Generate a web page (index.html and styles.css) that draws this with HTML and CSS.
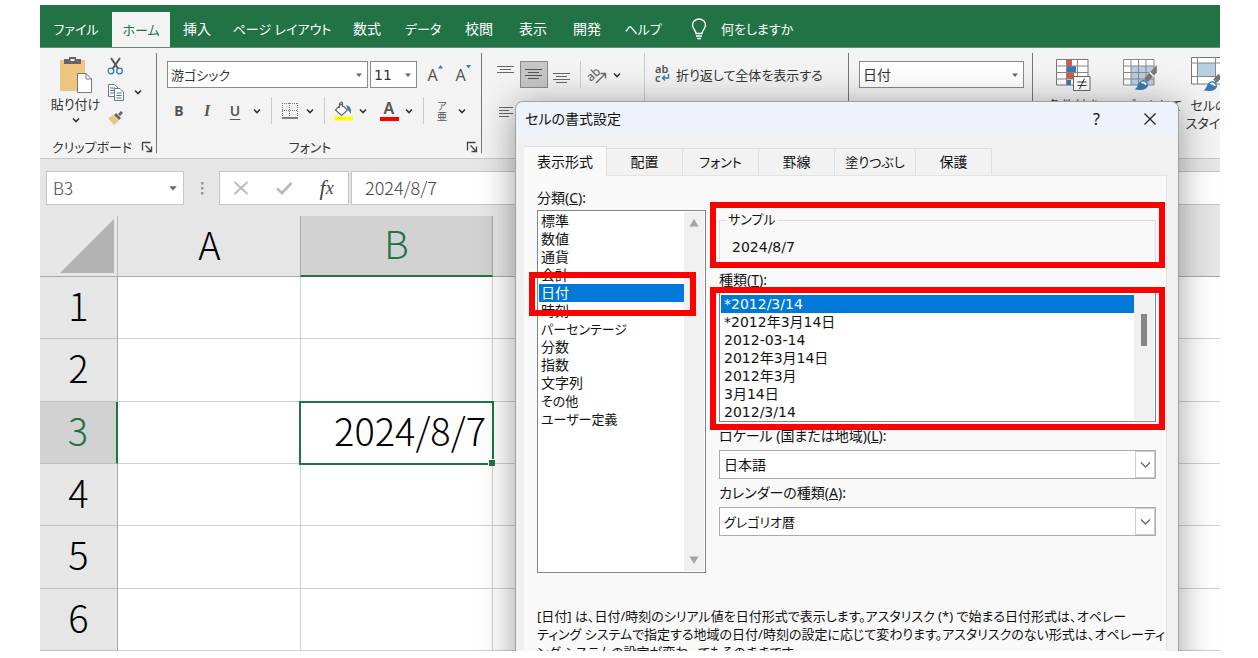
FILE: index.html
```html
<!DOCTYPE html>
<html lang="ja">
<head>
<meta charset="utf-8">
<title>セルの書式設定</title>
<link rel="stylesheet" href="styles.css">
</head>
<body>
<svg class="defs" aria-hidden="true">
  <symbol id="chev" viewBox="0 0 10 10"><path d="M2 3.5 5 6.5 8 3.5" fill="none" stroke="#333" stroke-width="1.6"/></symbol>
  <symbol id="tri" viewBox="0 0 8 8"><path d="M1 2.5H7L4 6Z" fill="#666"/></symbol>
  <symbol id="launch" viewBox="0 0 12 12"><path d="M1.5 9.500V1.500H9.500M4.500 4.500 10 10M10.500 5.500V10.500H5.500" fill="none" stroke="#444" stroke-width="1.3"/></symbol>
  <symbol id="brush" viewBox="0 0 26 30"><path d="M25 0V8L15 19 11 15Z" fill="#777"/><path d="M17 8 22 13" stroke="#fff" stroke-width="1.500"/><path d="M0 27C4 26 3 21 7 18Q11 15 14 19 17 23 13 26 8 29 0 27Z" fill="#3b78b8"/><path d="M8 20Q11 18 13 22" stroke="#fff" stroke-width="2" fill="none"/></symbol>
</svg>
<main class="app">
  <nav class="tabs">
    <button class="tab w72 kana">ファイル</button>
    <button class="tab w58 active kana">ホーム</button>
    <button class="tab">挿入</button>
    <button class="tab w116 kana">ページ レイアウト</button>
    <button class="tab">数式</button>
    <button class="tab w58 kana">データ</button>
    <button class="tab">校閲</button>
    <button class="tab">表示</button>
    <button class="tab">開発</button>
    <button class="tab w58 kana">ヘルプ</button>
    <button class="tell kana"><svg width="16" height="22" viewBox="0 0 16 22"><path d="M5 15.500C5 12 1.500 11 1.500 7A6.500 6 0 0 1 14.500 7C14.500 11 11 12 11 15.500ZM5 18H11M6 20.500H10" fill="none" stroke="#fff" stroke-width="1.400"/></svg>何をしますか</button>
  </nav>

  <section class="ribbon">
    <div class="group clipboard">
      <div class="clip-body">
        <button class="paste kana">
          <svg width="34" height="36" viewBox="0 0 34 36"><path d="M1 3H26V34H1Z" fill="#edc57f"/><path d="M5 7V2H10V0H17V2H22V7Z" fill="#666"/><path d="M11.500 2H15.500V4H11.500Z" fill="#eee"/><path d="M18.500 16.500H27L32.500 22V35.500H18.500Z" fill="#fff" stroke="#777"/><path d="M27 16.500V22H32.500" fill="none" stroke="#777"/></svg>
          <span>貼り付け</span>
          <svg width="10" height="10"><use href="#chev"/></svg>
        </button>
        <div class="clip-side">
          <button aria-label="切り取り"><svg width="17" height="18" viewBox="0 0 17 18"><path d="M4 1 11.500 12M13 1 5.500 12" stroke="#555" stroke-width="2" fill="none"/><circle cx="4" cy="14" r="2.800" fill="none" stroke="#3b78b8" stroke-width="1.300"/><circle cx="12.500" cy="14" r="2.800" fill="none" stroke="#3b78b8" stroke-width="1.300"/></svg></button>
          <button class="copy" aria-label="コピー"><svg width="18" height="18" viewBox="0 0 18 18"><path d="M1.500 1.500H7L10.500 4V13.500H1.500Z" fill="#fff" stroke="#777"/><path d="M3 5H8M3 7.500H8M3 10H8" stroke="#3b78b8"/><path d="M7.500 5.500H13L16.500 9V17.500H7.500Z" fill="#fff" stroke="#777"/><path d="M9.500 10H14.500M9.500 12.500H14.500M9.500 15H14.500" stroke="#3b78b8"/></svg><svg width="10" height="10"><use href="#chev"/></svg></button>
          <button aria-label="書式のコピー"><svg width="17" height="16" viewBox="0 0 17 16"><path d="M1 8 6 5 12 11 7 15Z" fill="#edc57f"/><path d="M7 5 9 3 14 8 12 10ZM11 4 14 1 16 3 13 6Z" fill="#666"/></svg></button>
        </div>
      </div>
      <footer class="caption kana"><span>クリップボード</span><button aria-label="クリップボードの設定"><svg width="12" height="12"><use href="#launch"/></svg></button></footer>
    </div>

    <div class="group font">
      <div class="row">
        <label class="combo font-name kana"><select aria-label="フォント"><option>游ゴシック</option></select><svg width="8" height="8"><use href="#tri"/></svg></label>
        <label class="combo font-size"><select aria-label="フォント サイズ"><option>11</option></select><svg width="8" height="8"><use href="#tri"/></svg></label>
        <button class="tool grow">A<svg width="5" height="4" viewBox="0 0 5 4"><path d="M0 3.500 2.500 0 5 3.500Z" fill="#3b78b8"/></svg></button>
        <button class="tool grow">A<svg width="5" height="4" viewBox="0 0 5 4"><path d="M0 0H5L2.500 3.500Z" fill="#3b78b8"/></svg></button>
      </div>
      <div class="row">
        <button class="tool wide bold">B</button><button class="tool wide italic">I</button><button class="tool wide under">U</button><button class="drop" aria-label="下線"><svg width="10" height="10"><use href="#chev"/></svg></button>
        <i class="sep"></i>
        <button class="tool" aria-label="罫線"><svg width="18" height="18" viewBox="0 0 18 18"><path d="M1 1.500H17M1 8.500H17M1.500 1V15M8.500 1V15M16.500 1V15" stroke="#777" stroke-dasharray="1 1" fill="none"/><path d="M1 16H17" stroke="#555" stroke-width="1.500"/></svg></button><button class="drop" aria-label="罫線の種類"><svg width="10" height="10"><use href="#chev"/></svg></button>
        <i class="sep"></i>
        <button class="tool" aria-label="塗りつぶしの色"><svg width="20" height="20" viewBox="0 0 20 20"><path d="M8 3 14.500 9 8.500 14.500 2.500 9ZM6.500 7V3Q8 0 9.500 2V6" fill="#fff" stroke="#666" stroke-width="1.200"/><path d="M13 4Q19 5 18 13L15 9Z" fill="#3b78b8"/><path d="M1 15.500H20V19.500H1Z" fill="#ff0"/></svg></button><button class="drop" aria-label="色の選択"><svg width="10" height="10"><use href="#chev"/></svg></button>
        <button class="tool fontcolor">A</button><button class="drop" aria-label="文字色の選択"><svg width="10" height="10"><use href="#chev"/></svg></button>
        <i class="sep"></i>
        <button class="tool ruby"><span>ア</span><span>亜</span></button><button class="drop" aria-label="ふりがな"><svg width="10" height="10"><use href="#chev"/></svg></button>
      </div>
      <footer class="caption kana"><span>フォント</span><button aria-label="フォントの設定"><svg width="12" height="12"><use href="#launch"/></svg></button></footer>
    </div>

    <div class="group align">
      <div class="align-left">
        <div class="row">
          <button class="tool wide" aria-label="上揃え"><svg width="18" height="22" viewBox="0 0 18 22"><path d="M0 2.500H17M3 5.500H14M0 8.500H17" stroke="#666" fill="none"/></svg></button>
          <button class="tool wide pressed" aria-label="上下中央揃え"><svg width="18" height="22" viewBox="0 0 18 22"><path d="M0 5.500H17M3 8.500H14M0 11.500H17M3 14.500H14" stroke="#555" fill="none"/></svg></button>
          <button class="tool wide" aria-label="下揃え"><svg width="18" height="22" viewBox="0 0 18 22"><path d="M0 9.500H17M3 12.500H14M0 15.500H17M3 18.500H14" stroke="#666" fill="none"/></svg></button>
          <i class="sep"></i>
          <button class="tool orient" aria-label="方向"><svg width="20" height="20" viewBox="0 0 20 20"><text x="0" y="13" transform="rotate(-42 7 10)" class="svg-ab">ab</text><path d="M9 18 18 9M13.500 8.500H18.500V13.500" fill="none" stroke="#666" stroke-width="1.300"/></svg></button><button class="drop" aria-label="方向の選択"><svg width="10" height="10"><use href="#chev"/></svg></button>
        </div>
        <div class="row">
          <button class="tool wide" aria-label="左揃え"><svg width="18" height="12" viewBox="0 0 18 12"><path d="M2 1.500H16M2 4.500H12M2 7.500H16M2 10.500H12" stroke="#666" fill="none"/></svg></button>
        </div>
      </div>
      <button class="wrap kana"><svg width="17" height="20" viewBox="0 0 17 20"><text x="1" y="8" class="svg-wrap">ab</text><text x="1" y="17" class="svg-wrap">c</text><path d="M14.500 9V13H8.500M11 10.500 8.500 13 11 15.500" fill="none" stroke="#3b78b8" stroke-width="1.400"/></svg>折り返して全体を表示する</button>
    </div>

    <div class="group number">
      <div class="row"><label class="combo number-format"><select aria-label="表示形式"><option>日付</option></select><svg width="8" height="8"><use href="#tri"/></svg></label></div>
    </div>

    <div class="group styles kana">
      <button class="big">
        <svg width="36" height="34" viewBox="0 0 36 34"><path d="M1.500 1.500H33V27H1.500Z" fill="#fff" stroke="#777"/><path d="M11 2H17V8H11ZM11 15H19V21H11Z" fill="#d65a3a"/><path d="M11 8H21V14H11ZM11 22H16V27H11Z" fill="#3b78b8"/><path d="M11.500 1V27M22.500 1V27M1 8H33M1 14.500H33M1 21H33" stroke="#888" fill="none"/><path d="M18.500 18.500H35V32.500H18.500Z" fill="#fff" stroke="#666"/><path d="M22.500 24H31.500M22.500 27.500H31.500M29.500 20.500 24.500 31" stroke="#333" fill="none"/></svg>
        <span>条件付き</span></button>
      <button class="big wider">
        <svg width="38" height="34" viewBox="0 0 38 34"><path d="M1.500 1.500H32V27H1.500Z" fill="#fff"/><path d="M9 8H32V27H9Z" fill="#b9cde5"/><path d="M1.500 1.500H32V27H1.500ZM9 1V27M16.500 1V27M24 1V27M1 8H32M1 14.500H32M1 21H32" stroke="#888" fill="none"/><use href="#brush" x="11" y="7" width="26" height="27"/></svg>
        <span>テーブルとして</span></button>
      <button class="big">
        <svg width="38" height="36" viewBox="0 0 38 36"><path d="M1.500 .5H36V27H1.500Z" fill="#fff" stroke="#777"/><path d="M8 6H25V19H8Z" fill="#b9cde5"/><path d="M7.500 0V27M25.500 0V27M1 6H36M1 19.500H36" stroke="#888" fill="none"/><use href="#brush" x="12" y="9" width="26" height="27"/></svg>
        <span>セルの<br>スタイル</span></button>
    </div>
  </section>

  <section class="formula">
    <label class="combo namebox"><select aria-label="名前ボックス"><option>B3</option></select><svg width="10" height="10"><use href="#tri"/></svg></label>
    <svg class="dots" width="4" height="14" viewBox="0 0 4 14"><path d="M1 1H3.500V3.500H1ZM1 6H3.500V8.500H1ZM1 11H3.500V13.500H1Z" fill="#999"/></svg>
    <div class="fx">
      <button aria-label="キャンセル"><svg width="16" height="14" viewBox="0 0 16 14"><path d="M1.500 1 14.500 13M14.500 1 1.500 13" stroke="#bbb" stroke-width="2"/></svg></button>
      <button aria-label="入力"><svg width="17" height="14" viewBox="0 0 17 14"><path d="M1 7.500 6 12 15.500 2" fill="none" stroke="#bbb" stroke-width="2.800"/></svg></button>
      <button class="fn"><b>f</b>x</button>
    </div>
    <input class="value" aria-label="数式バー" value="2024/8/7">
  </section>

  <table class="sheet">
    <thead><tr><th class="corner"><svg width="54" height="54" viewBox="0 0 54 54"><path d="M54 0V54H0Z" fill="#b3b3b3"/></svg></th><th class="col-a">A</th><th class="col-b sel">B</th><th></th></tr></thead>
    <tbody>
      <tr><th>1</th><td></td><td></td><td></td></tr>
      <tr><th>2</th><td></td><td></td><td></td></tr>
      <tr><th class="sel">3</th><td></td><td class="cursor">2024/8/7</td><td></td></tr>
      <tr><th>4</th><td></td><td></td><td></td></tr>
      <tr><th>5</th><td></td><td></td><td></td></tr>
      <tr><th>6</th><td></td><td></td><td></td></tr>
    </tbody>
  </table>

  <section class="dialog" role="dialog" aria-labelledby="dlg-title">
    <header class="titlebar"><h1 id="dlg-title">セルの書式設定</h1><button class="help">?</button><button aria-label="閉じる"><svg width="14" height="14" viewBox="0 0 14 14"><path d="M1.500 1.500 12.500 12.500M12.500 1.500 1.500 12.500" stroke="#222" stroke-width="1.300"/></svg></button></header>
    <div class="dtabs" role="tablist">
      <button class="dtab current" role="tab" aria-selected="true">表示形式</button>
      <button class="dtab" role="tab">配置</button>
      <button class="dtab kana" role="tab">フォント</button>
      <button class="dtab" role="tab">罫線</button>
      <button class="dtab kana" role="tab">塗りつぶし</button>
      <button class="dtab" role="tab">保護</button>
    </div>
    <div class="panel">
      <div class="columns">
        <div class="category">
          <div class="label" id="l-cat">分類(<u>C</u>):</div>
          <div class="listbox tall">
            <ul role="listbox" aria-labelledby="l-cat">
              <li role="option">標準</li><li role="option">数値</li><li role="option">通貨</li><li role="option">会計</li>
              <li role="option" class="on framed" aria-selected="true">日付</li>
              <li role="option">時刻</li><li role="option" class="kana">パーセンテージ</li><li role="option">分数</li><li role="option">指数</li><li role="option">文字列</li><li role="option" class="kana">その他</li><li role="option" class="kana">ユーザー定義</li>
            </ul>
            <div class="scroll"><svg width="10" height="8" viewBox="0 0 10 8"><path d="M5 0 9.500 7.500H.5Z" fill="#a3a3a3"/></svg><svg width="10" height="8" viewBox="0 0 10 8"><path d="M5 8 9.500 .5H.5Z" fill="#a3a3a3"/></svg></div>
          </div>
        </div>
        <div class="detail">
          <div class="sample framed"><fieldset><legend class="kana">サンプル</legend>2024/8/7</fieldset></div>
          <div class="label type-label" id="l-type">種類(<u>T</u>):</div>
          <div class="listbox types framed">
            <ul role="listbox" aria-labelledby="l-type">
              <li role="option" class="on" aria-selected="true">*2012/3/14</li><li role="option">*2012年3月14日</li><li role="option">2012-03-14</li><li role="option">2012年3月14日</li><li role="option">2012年3月</li><li role="option">3月14日</li><li role="option">2012/3/14</li>
            </ul>
            <div class="scroll"><span class="thumb"></span></div>
          </div>
          <label class="label sel-label" for="locale">ロケール (国または地域)(<u>L</u>):</label>
          <div class="picker"><select id="locale"><option>日本語</option></select><span><svg width="11" height="8" viewBox="0 0 11 8"><path d="M1 1.500 5.500 6 10 1.500" fill="none" stroke="#666" stroke-width="1.300"/></svg></span></div>
          <label class="label sel-label" for="calendar">カレンダーの種類(<u>A</u>):</label>
          <div class="picker kana"><select id="calendar"><option>グレゴリオ暦</option></select><span><svg width="11" height="8" viewBox="0 0 11 8"><path d="M1 1.500 5.500 6 10 1.500" fill="none" stroke="#666" stroke-width="1.300"/></svg></span></div>
        </div>
      </div>
      <p class="note kana">[日付] は、日付/時刻のシリアル値を日付形式で表示します。アスタリスク (*) で始まる日付形式は、オペレー<br>ティング システムで指定する地域の日付/時刻の設定に応じて変わります。アスタリスクのない形式は、オペレーティ<br>ング システムの設定が変わってもそのままです。</p>
    </div>
  </section>
</main>
</body>
</html>
```
FILE: styles.css
```css
* { box-sizing: border-box; }
body { margin: 0; padding: 5px 38px 0 40px; background: #fff; overflow: hidden; font: 14px/18px "Noto Sans", "Noto Sans CJK JP", sans-serif; font-feature-settings: "palt"; color: #333; }
button, select, input { font: inherit; font-feature-settings: inherit; color: inherit; border: 0; background: none; padding: 0; margin: 0; border-radius: 0; white-space: nowrap; }
svg { display: block; flex: none; overflow: visible; }
.kana { font-size: 13px; }
.defs { position: absolute; width: 0; height: 0; }
.app { position: relative; display: flex; flex-direction: column; height: calc(100vh - 12px); overflow: hidden; background: #e6e6e6; }

.tabs { display: flex; align-items: flex-end; flex: none; height: 43px; background: #217346; border-bottom: 1px solid #5c8f73; }
.tab { width: 54px; height: 36px; color: #fff; }
.tab.w58 { width: 58px; }
.tab.w72 { width: 72px; }
.tab.w116 { width: 116px; }
.tab.active { background: #f3f3f3; color: #217346; height: 35px; }
.tell { display: flex; align-items: center; gap: 14px; height: 36px; margin-left: 19px; color: #fff; }

.ribbon { display: flex; flex: none; height: 111px; padding: 5px 0; background: #f3f3f3; border-bottom: 1px solid #c8c8c8; }
.group { display: flex; flex-direction: column; flex: none; border-right: 1px solid #777; position: relative; }
.row { display: flex; align-items: center; height: 27px; }
.caption { display: flex; justify-content: center; align-items: center; margin-top: auto; height: 12px; position: relative; }
.caption button { position: absolute; right: 3px; top: 0; }
.clipboard { width: 117px; }
.clip-body { display: flex; padding: 4px 0 0 11px; gap: 7px; }
.paste { width: 49px; display: flex; flex-direction: column; align-items: center; line-height: 22px; }
.clip-side { display: flex; flex-direction: column; gap: 8px; }
.clip-side button { display: flex; align-items: center; gap: 8px; height: 18px; }
.clipboard .caption { justify-content: flex-start; padding-left: 12px; }
.font { width: 325px; padding: 8px 0 0 8px; gap: 9px; }
.font .caption { padding-right: 26px; }
.combo { position: relative; display: flex; align-items: center; background: #fff; border: 1px solid #8a8a8a; }
.combo select { appearance: none; width: 100%; height: 100%; padding-left: 3px; }
.combo svg { position: absolute; right: 4px; }
.font-name { width: 201px; height: 27px; margin: 0 2px; }
.font-size { width: 47px; height: 27px; margin-right: 4px; }
.font-size select { font-family: "DejaVu Sans", sans-serif; }
.tool { width: 24px; height: 27px; display: flex; align-items: center; justify-content: center; flex: none; color: #555; }
.tool.wide { width: 28px; }
.grow { width: 28px; font-size: 16px; }
.grow svg { align-self: flex-start; margin-top: 4px; }
.drop { width: 16px; display: flex; justify-content: center; flex: none; }
.sep { width: 1px; height: 27px; background: #ccc; margin: 0 6px; flex: none; }
.bold { font-weight: 700; }
.italic { font: italic 700 16px "Liberation Serif", serif; }
.under { font-weight: 600; text-decoration: underline; text-underline-offset: 3px; }
.drop + .fontcolor { margin-left: 6px; }
.fontcolor { height: 20px; padding-bottom: 4px; font-size: 16px; font-weight: 600; line-height: 15px; background: linear-gradient(#f00, #f00) center bottom / 19px 4px no-repeat; }
.ruby { flex-direction: column; font-size: 10px; line-height: 10px; }
.align { width: 367px; flex-direction: row; padding-left: 10px; }
.align-left { width: 153px; padding-top: 8px; display: flex; flex-direction: column; gap: 10px; border-right: 1px solid #ccc; }
.align-left .pressed { background: #c6c6c6; border: 1px solid #8a8a8a; }
.align-left .sep { margin: 0 4px; }
.wrap { display: flex; align-items: center; gap: 5px; height: 27px; margin: 8px 0 0 9px; }
.svg-ab { font: 12px "Noto Sans", sans-serif; fill: #555; }
.svg-wrap { font: 600 11px "Noto Sans", sans-serif; fill: #555; }
.number { width: 184px; padding: 8px 0 0 10px; }
.number-format { width: 165px; height: 27px; }
.styles { flex-direction: row; align-items: flex-start; flex: 1; min-width: 0; overflow: hidden; border: 0; padding-left: 10px; }
.big { width: 60px; flex: none; display: flex; flex-direction: column; align-items: center; gap: 4px; padding-top: 5px; }
.big.wider { width: 76px; }
.big:last-child { gap: 3px; padding-top: 4px; }

.formula { display: flex; flex: none; height: 57px; padding: 12px 0 11px 6px; color: #444; font-family: "Noto Sans CJK JP", sans-serif; font-weight: 300; font-feature-settings: normal; }
.formula > * { height: 34px; }
.namebox { width: 138px; border-color: #c6c6c6; }
.namebox select { font-size: 17px; padding-left: 6px; }
.namebox svg { right: 5px; }
.formula .dots { height: 14px; margin: 10px 15px 0 16px; }
.fx { display: flex; width: 130px; background: #fff; border: 1px solid #c6c6c6; margin-right: 2px; }
.fx button { flex: 1; display: flex; align-items: center; justify-content: center; }
.fx .fn { font: italic 18px/20px "Liberation Serif", serif; }
.fn b { font-size: 22px; font-weight: 400; }
.value { flex: 1; min-width: 0; background: #fff; border: 1px solid #c6c6c6; border-right: 0; padding: 0 0 3px 13px; font-size: 18px; }

.sheet { flex: 1; width: 100%; min-height: 0; display: grid; grid-template-rows: 61px 1fr; font: 300 38px/38px "Noto Sans CJK JP", sans-serif; font-feature-settings: normal; color: #000; }
.sheet thead, .sheet tbody { display: grid; }
.sheet tbody { grid-auto-rows: 1fr; }
.sheet tr { display: grid; grid-template-columns: 78px 183px 192px 1fr; }
.sheet th, .sheet td { display: flex; align-items: center; justify-content: center; padding: 0 0 5px; font-weight: 300; }
.sheet td { background: #fff; border: solid #d0d0d0; border-width: 0 1px 1px 0; position: relative; }
.sheet td:last-child { border-right: 0; }
.sheet th { background: #e6e6e6; border-bottom: 1px solid #aaa; }
.sheet tbody th { border-right: 1px solid #aaa; border-bottom-color: #c0c0c0; }
.sheet .corner { justify-content: flex-end; padding: 0 3px 0 0; border-right: 1px solid #bbb; }
.sheet .sel { background: #d2d2d2; color: #217346; }
.sheet thead .sel { border-bottom: 2px solid #217346; border-right: 1px solid #aaa; border-left: 1px solid #aaa; margin-left: -1px; }
.sheet tbody .sel { border-right: 2px solid #217346; }
.sheet .cursor { justify-content: flex-end; padding-right: 6px; outline: 2px solid #217346; outline-offset: -1px; z-index: 1; margin-left: -1px; }
.cursor::after { content: ""; position: absolute; right: -3px; bottom: -3px; width: 6px; height: 6px; background: #217346; border: solid #fff; border-width: 1px 0 0 1px; }

.dialog { position: absolute; left: 475px; right: 41px; top: 96px; bottom: -40px; z-index: 2; background: #f0f0f0; border: 1px solid #a0a0a0; border-radius: 8px 8px 0 0; box-shadow: 0 4px 36px rgba(0,0,0,.38); padding: 0 11px 0 8px; color: #111; }
.titlebar { display: flex; align-items: center; gap: 43px; height: 34px; margin: 0 -11px 10px -8px; padding: 0 21px 0 9px; background: #eef3fb; border-radius: 8px 8px 0 0; }
.titlebar h1 { margin: 0 auto 0 0; font-size: 14px; font-weight: 400; }
.help { font-size: 16px; }
.dtabs { display: flex; align-items: flex-end; height: 29px; }
.dtab { width: 76px; height: 27px; border: solid #e0e0e0; border-width: 1px 1px 0 0; background: #f2f2f2; }
.dtab.current { width: 83px; height: 30px; background: #f9f9f9; margin-bottom: -1px; }
.dtab:nth-child(5) { width: 81px; }
.panel { height: 100%; padding: 13px 10px 0 13px; background: #f9f9f9; border: 1px solid #e3e3e3; border-left: 0; }
.label { display: block; height: 18px; }
.columns { display: flex; gap: 13px; }
.category { width: 169px; flex: none; }
.detail { flex: 1; padding-top: 22px; }
.listbox { display: flex; background: #fff; border: 1px solid #7d868f; padding: 1px; margin-top: 3px; }
.listbox ul { flex: 1; margin: 0; padding: 0; list-style: none; }
.listbox li { height: 18px; padding-left: 2px; white-space: nowrap; }
.listbox .on { background: #0078d7; color: #fff; }
.tall { height: 363px; }
.scroll { width: 20px; background: #f0f0f0; display: flex; flex-direction: column; justify-content: space-between; align-items: center; padding: 7px 0; }
.types { font-family: "DejaVu Sans", "Noto Sans CJK JP", sans-serif; height: 130px; padding-top: 2px; }
.types .scroll { justify-content: flex-start; padding-top: 19px; }
.types li { padding-left: 3px; }
.thumb { width: 6px; height: 32px; background: #858585; }
.framed { position: relative; }
.framed::after { content: ""; position: absolute; z-index: 3; border: 6px solid #f00; }
li.framed::after { inset: -12px -12px -14px -10px; }
.sample::after { inset: -9px -9px -4px -9px; }
.types::after { inset: -6px -10px -9px -10px; }
.sample fieldset { margin: 0; padding: 9px 12px 7px; border: 1px solid #dcdcdc; font-family: "DejaVu Sans", "Noto Sans CJK JP", sans-serif; }
.sample legend { padding: 0 1px; margin-left: -5px; }
.type-label { margin-top: 7px; }
.sel-label { margin-top: 5px; }
.picker { position: relative; height: 29px; margin-top: 5px; display: flex; }
.picker select { appearance: none; width: 100%; background: #fff; border: 1px solid #ababab; padding-left: 4px; }
.picker span { position: absolute; right: 1px; top: 1px; bottom: 1px; width: 20px; border: 1px solid #ccc; display: flex; align-items: center; justify-content: center; pointer-events: none; }
.note { margin: 34px 0 0; white-space: nowrap; }
```
